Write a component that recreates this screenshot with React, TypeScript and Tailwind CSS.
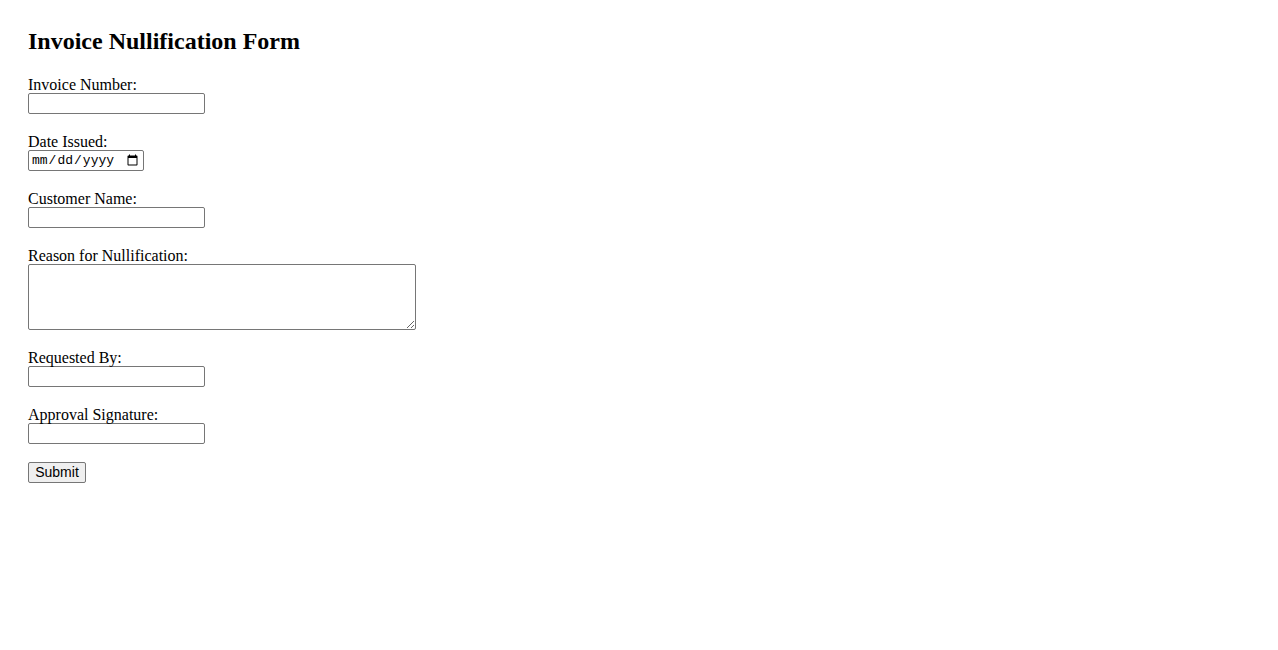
const serif = "font-['Liberation_Serif','Times_New_Roman',serif]";
const field =
  'block h-[21px] w-[177px] rounded-[2px] border border-[#767676] bg-white px-[2px] text-[13.33px] outline-none';

function Group({ label, children }: { label: string; children: React.ReactNode }) {
  return (
    <div className="mb-[18px]">
      <label className="block h-[18px] pt-px text-[16px] leading-[18px]">{label}</label>
      {children}
    </div>
  );
}

export default function App() {
  return (
    <div className={`min-h-[650px] bg-white pl-[28px] pt-[28px] text-black ${serif}`}>
      <h2 className="mb-[20px] h-[27px] text-[24px] font-bold leading-[27px]">Invoice Nullification Form</h2>
      <form onSubmit={(e) => e.preventDefault()}>
        <Group label="Invoice Number:">
          <input type="text" className={field} />
        </Group>
        <Group label="Date Issued:">
          <input
            type="date"
            className="block h-[21px] w-[116px] rounded-[2px] border border-[#767676] bg-white px-[2px] font-['Liberation_Mono',monospace] text-[13px] outline-none"
          />
        </Group>
        <Group label="Customer Name:">
          <input type="text" className={field} />
        </Group>
        <Group label="Reason for Nullification:">
          <textarea className="block h-[66px] w-[388px] rounded-[2px] border border-[#767676] bg-white p-[2px] text-[13px] outline-none" />
        </Group>
        <Group label="Requested By:">
          <input type="text" className={field} />
        </Group>
        <Group label="Approval Signature:">
          <input type="text" className={field} />
        </Group>
        <button
          type="submit"
          className="block h-[21px] w-[58px] rounded-[2px] border border-[#767676] bg-[#efefef] font-['Liberation_Sans',Arial,sans-serif] text-[14px] leading-[17px]"
        >
          Submit
        </button>
      </form>
    </div>
  );
}
